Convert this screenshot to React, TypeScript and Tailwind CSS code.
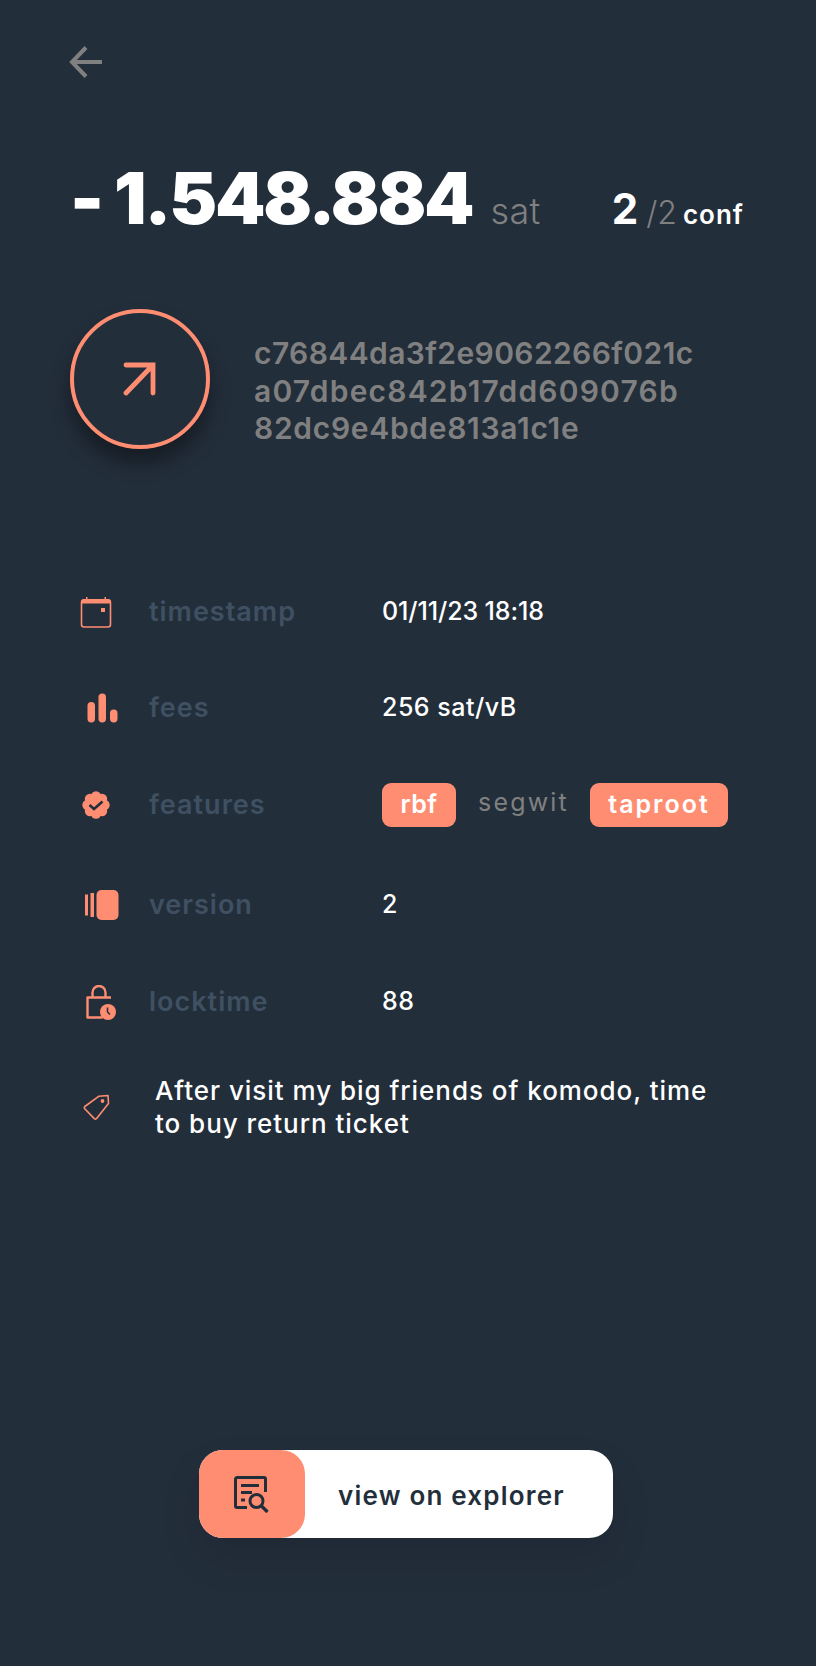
import type { ReactNode } from 'react';

const orange = '#ff8d72';
const dark = '#232e3b';

function BackArrow() {
  return (
    <svg width="34" height="32" viewBox="0 0 34 32" fill="none" stroke="#808080" strokeWidth="4">
      <path d="M33 16H4" />
      <path d="M17 1.500 3 16l14 14.500" />
    </svg>
  );
}

function CalendarIcon() {
  return (
    <svg width="32" height="31" viewBox="0 0 32 31" fill="none">
      <rect x="1.500" y="3" width="29" height="27" rx="2.500" stroke={orange} strokeWidth="1.600" />
      <path d="M1 5A3 3 0 0 1 4 2H28A3 3 0 0 1 31 5V6.500H1Z" fill={orange} />
      <path d="M6 0h1.500v3H6zM24.500 0H26v3h-1.500z" fill={orange} />
      <rect x="21" y="11" width="4" height="4" fill={orange} />
    </svg>
  );
}

function BarsIcon() {
  return (
    <svg width="31" height="30" viewBox="0 0 31 30" fill={orange}>
      <rect x="0.500" y="9" width="7.500" height="20.500" rx="3.700" />
      <rect x="11.500" y="0.500" width="7.500" height="29" rx="3.700" />
      <rect x="23" y="16.500" width="7.500" height="13" rx="3.700" />
    </svg>
  );
}

function BadgeIcon() {
  const bumps = [0, 45, 90, 135, 180, 225, 270, 315];
  return (
    <svg width="28" height="28" viewBox="0 0 28 28" fill="none">
      <circle cx="14" cy="14" r="11" fill={orange} />
      {bumps.map((a) => (
        <circle
          key={a}
          cx={14 + 8.500 * Math.cos((a * Math.PI) / 180)}
          cy={14 + 8.500 * Math.sin((a * Math.PI) / 180)}
          r="5.200"
          fill={orange}
        />
      ))}
      <path d="M7.500 14 12 18 20.500 10.500" stroke={dark} strokeWidth="2.600" />
    </svg>
  );
}

function VersionIcon() {
  return (
    <svg width="34" height="30" viewBox="0 0 34 30" fill={orange}>
      <rect x="0" y="4.500" width="3" height="21" />
      <rect x="5.500" y="3" width="3.500" height="24" />
      <rect x="11.500" y="0" width="22" height="30" rx="5" />
    </svg>
  );
}

function LockIcon() {
  return (
    <svg width="31" height="35" viewBox="0 0 31 35" fill="none">
      <path d="M25 12.500H1.500v20h15" stroke={orange} strokeWidth="2.400" strokeLinejoin="round" />
      <path d="M6.500 12V7.500a6.500 6.500 0 0 1 13 0V12" stroke={orange} strokeWidth="2.400" />
      <circle cx="22" cy="27" r="8" fill={orange} />
      <path d="M21.500 22.500v4.500l2.500 2.500" stroke={dark} strokeWidth="1.500" />
    </svg>
  );
}

function TagIcon() {
  return (
    <svg width="27" height="27" viewBox="0 0 27 27" fill="none">
      <path
        d="M1.800 12.500 16 2.200 25 1.500 25.500 9.500 13.800 24.300a1.800 1.800 0 0 1-2.500.3L2 15a1.800 1.800 0 0 1-.2-2.500Z"
        stroke={orange}
        strokeWidth="1.600"
        strokeLinejoin="round"
      />
      <circle cx="19.500" cy="7" r="1.900" fill={orange} />
    </svg>
  );
}

function ExplorerIcon() {
  return (
    <svg width="36" height="37" viewBox="0 0 36 37" fill="none" stroke={dark} strokeWidth="3">
      <path d="M13 31.500H3A1.500 1.500 0 0 1 1.500 30V3A1.500 1.500 0 0 1 3 1.500h27A1.500 1.500 0 0 1 31.500 3v13" />
      <path d="M7 9.500h18M7 16.500h11M7 24h4" />
      <circle cx="22.500" cy="25" r="6.500" />
      <path d="m27.500 30 6 6" strokeWidth="3.400" />
    </svg>
  );
}

function Row({
  icon,
  iconClass,
  label,
  valueClass,
  children,
  className,
}: {
  icon: ReactNode;
  iconClass: string;
  label: string;
  valueClass?: string;
  children: ReactNode;
  className: string;
}) {
  return (
    <div className={`flex items-center ${className}`}>
      <div className={`flex w-[79px] shrink-0 items-center ${iconClass}`}>{icon}</div>
      <div className="w-[233px] shrink-0 text-[27px] font-semibold tracking-[1px] text-[#3f5062]">{label}</div>
      <div className={`text-[25px] font-medium text-white ${valueClass ?? 'tracking-[0.5px]'}`}>{children}</div>
    </div>
  );
}

export default function App() {
  return (
    <div className="h-[1666px] w-[816px] overflow-hidden bg-[#232e3b] pl-[70px] font-['Inter',sans-serif]">
      <div className="-ml-[1px] pt-[46px]">
        <BackArrow />
      </div>

      {/* amount */}
      <div className="mt-[84px] flex h-[72px] items-baseline whitespace-nowrap text-white">
        <span className="text-[72px] leading-[72px] font-black tracking-[-2.200px]">- 1.548.884</span>
        <span className="ml-[18px] text-[36px] font-light tracking-[0.4px] text-[#808080]">sat</span>
        <span className="ml-[71px] text-[42px] font-bold">2</span>
        <span className="ml-[8px] text-[32px] font-light text-[#808080]">/2</span>
        <span className="ml-[6px] text-[26px] font-semibold tracking-[1px]">conf</span>
      </div>

      {/* tx hash */}
      <div className="mt-[75px] flex items-center">
        <div className="relative flex h-[140px] w-[140px] shrink-0 items-center justify-center rounded-full border-4 border-[#ff8d72] shadow-[0_14px_20px_rgba(0,0,0,0.4)]">
          <svg className="-ml-[2px]" width="33" height="34" viewBox="0 0 33 34" fill="none" stroke={orange} strokeWidth="4.800" strokeLinecap="round">
            <path d="M3 3h27v28M30 3 3 31" />
          </svg>
        </div>
        <div className="ml-[44px] pt-[25px] text-[30px] leading-[37.500px] font-semibold text-[#808080]">
          <div className="tracking-[0.4px]">c76844da3f2e9062266f021c</div>
          <div className="tracking-[1.200px]">a07dbec842b17dd609076b</div>
          <div className="tracking-[0.700px]">82dc9e4bde813a1c1e</div>
        </div>
      </div>

      {/* details */}
      <Row icon={<CalendarIcon />} iconClass="pl-[10px]" label="timestamp" valueClass="tracking-[-0.100px]" className="mt-[143px] h-[40px]">
        01/11/23 18:18
      </Row>
      <Row icon={<BarsIcon />} iconClass="pl-[17px]" label="fees" className="mt-[56px] h-[40px]">
        256 sat/vB
      </Row>
      <Row icon={<BadgeIcon />} iconClass="pl-[12px]" label="features" className="mt-[55px] h-[44px]">
        <div className="flex items-center">
          <span className="flex h-[44px] w-[74px] items-center justify-center rounded-[9px] bg-[#ff8d72] font-semibold">rbf</span>
          <span className="mb-[4px] ml-[22px] w-[90px] font-normal tracking-[2.200px] whitespace-nowrap text-[#808080]">segwit</span>
          <span className="ml-[22px] flex h-[44px] w-[138px] items-center justify-center rounded-[9px] bg-[#ff8d72] font-semibold tracking-[2px]">
            taproot
          </span>
        </div>
      </Row>
      <Row icon={<VersionIcon />} iconClass="pl-[15px]" label="version" className="mt-[58px] h-[40px]">
        2
      </Row>
      <Row icon={<LockIcon />} iconClass="pl-[16px]" label="locktime" className="mt-[57px] h-[40px]">
        88
      </Row>

      <div className="mt-[52px] flex items-center">
        <div className="flex w-[79px] shrink-0 items-center pl-[13px]">
          <TagIcon />
        </div>
        <div className="ml-[6px] w-[600px] text-[26px] leading-[33px] font-medium tracking-[0.960px] text-white">
          After visit my big friends of komodo, time
          <br />
          to buy return ticket
        </div>
      </div>

      {/* explorer button */}
      <div className="mt-[310px] ml-[129px] flex h-[88px] w-[414px] items-center rounded-[24px] bg-white shadow-[0_20px_40px_rgba(0,0,0,0.1)]">
        <div className="flex h-full w-[106px] items-center justify-center rounded-[24px] bg-[#ff8d72]">
          <ExplorerIcon />
        </div>
        <span className="mt-[2px] ml-[33px] text-[26px] font-semibold tracking-[1.200px] text-[#232e3b]">view on explorer</span>
      </div>
    </div>
  );
}
